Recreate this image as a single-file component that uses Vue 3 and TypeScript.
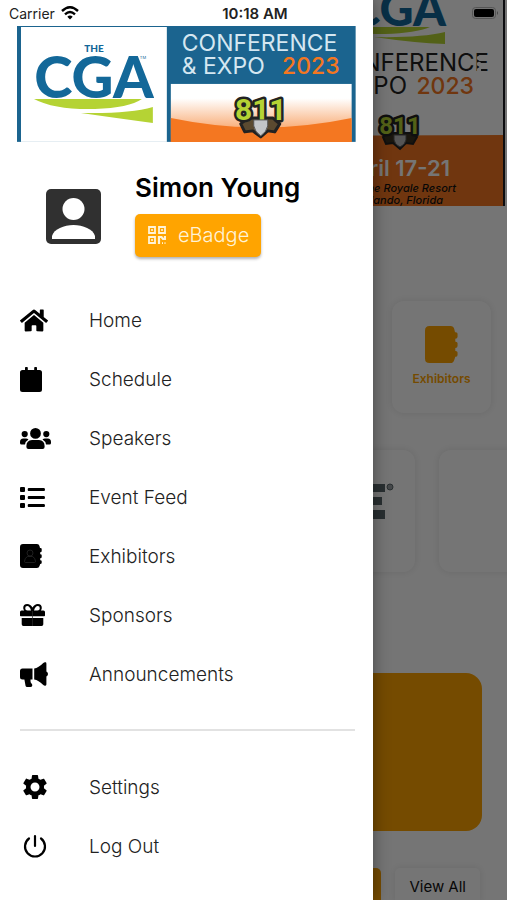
<script setup lang="ts">
interface MenuItem {
  label: string
  w: number
  h: number
  viewBox: string
  path: string
  detail?: string
}

const BOOK =
  'M3 0H17Q19 0 19.500 2L20 4H20.500Q21.700 4 21.700 5V7Q21.700 8.300 20.200 8.300V10.200H20.500Q21.700 10.200 21.700 11.200V13Q21.700 14.300 20.200 14.300V16.200H20.500Q21.700 16.200 21.700 17.200V18.800Q21.700 20 20.200 20L19.500 22Q19 24 17 24H3Q0 24 0 21V3Q0 0 3 0Z'

const items: MenuItem[] = [
  {
    label: 'Home', w: 28, h: 25, viewBox: '0 0 576 512',
    path: 'M280.37 148.26L96 300.11V464a16 16 0 0 0 16 16l112.06-.29a16 16 0 0 0 15.92-16V368a16 16 0 0 1 16-16h64a16 16 0 0 1 16 16v95.64a16 16 0 0 0 16 16.05L464 480a16 16 0 0 0 16-16V300L295.67 148.26a12.19 12.19 0 0 0-15.3 0zM571.6 251.47L488 182.56V44.05a12 12 0 0 0-12-12h-56a12 12 0 0 0-12 12v72.61L318.47 43a48 48 0 0 0-61 0L4.34 251.47a12 12 0 0 0-1.6 16.9l25.5 31A12 12 0 0 0 45.15 301l235.22-193.74a12.19 12.19 0 0 1 15.3 0L530.9 301a12 12 0 0 0 16.9-1.6l25.5-31a12 12 0 0 0-1.7-16.93z',
  },
  {
    label: 'Schedule', w: 22, h: 25, viewBox: '0 0 22 25',
    path: 'M2.5 3H5V.8Q5 0 5.8 0H7Q7.8 0 7.8 .8V3H14.2V.8Q14.2 0 15 0H16.2Q17 0 17 .8V3H19.5Q22 3 22 5.5V22.5Q22 25 19.5 25H2.5Q0 25 0 22.5V5.5Q0 3 2.5 3Z',
  },
  {
    label: 'Speakers', w: 31, h: 21, viewBox: '0 0 31 21',
    path: 'M15.5 0a5.4 5.4 0 1 1 0 10.8a5.4 5.4 0 0 1 0-10.8ZM4.7 3a3.1 3.1 0 1 1 0 6.2a3.1 3.1 0 0 1 0-6.2ZM26.3 3a3.1 3.1 0 1 1 0 6.2a3.1 3.1 0 0 1 0-6.2ZM12 12H19Q24.600 12.500 24.600 18V19Q24.600 21 22.600 21H8.400Q6.400 21 6.400 19V18Q6.400 12.500 12 12ZM3.300 10.500H6Q7.500 10.500 8.500 11.500Q5.500 13.200 5 16.500H1.500Q0 16.500 0 15V14Q0 10.500 3.300 10.500ZM27.700 10.500H25Q23.500 10.500 22.500 11.500Q25.500 13.200 26 16.500H29.500Q31 16.500 31 15V14Q31 10.500 27.700 10.500Z',
  },
  {
    label: 'Event Feed', w: 25, h: 21, viewBox: '0 0 25 21',
    path: 'M1 0H4Q5 0 5 1V4Q5 5 4 5H1Q0 5 0 4V1Q0 0 1 0ZM1 8H4Q5 8 5 9V12Q5 13 4 13H1Q0 13 0 12V9Q0 8 1 8ZM1 16H4Q5 16 5 17V20Q5 21 4 21H1Q0 21 0 20V17Q0 16 1 16ZM8.500 1H24Q25 1 25 2.500Q25 4 24 4H8.500Q7.700 4 7.700 2.500Q7.700 1 8.500 1ZM8.500 9H24Q25 9 25 10.500Q25 12 24 12H8.500Q7.700 12 7.700 10.500Q7.700 9 8.500 9ZM8.500 17H24Q25 17 25 18.500Q25 20 24 20H8.500Q7.700 20 7.700 18.500Q7.700 17 8.500 17Z',
  },
  {
    label: 'Exhibitors', w: 22, h: 24, viewBox: '0 0 22 24', path: BOOK,
    detail: 'M10 6a3 3 0 1 1 0 6a3 3 0 0 1 0-6ZM7.500 12.500H12.500Q15.500 14 15.500 17.500Q15.500 18.500 14.500 18.500H5.500Q4.500 18.500 4.500 17.500Q4.500 14 7.500 12.500Z',
  },
  {
    label: 'Sponsors', w: 25, h: 22, viewBox: '0 0 25 22',
    path: 'M1.500 6.500H4.200Q3.200 5.400 3.200 4Q3.200 0 7.200 0Q10.500 0 12.500 3.600Q14.500 0 17.800 0Q21.800 0 21.800 4Q21.800 5.400 20.800 6.500H23.500Q25 6.500 25 8V11.500Q25 12.300 24.200 12.300H.8Q0 12.300 0 11.500V8Q0 6.500 1.500 6.500ZM7.200 2Q5.200 2 5.200 4.200Q5.200 6.500 7.500 6.500H11Q9.800 2 7.200 2ZM17.800 2Q15.200 2 14 6.500H17.500Q19.800 6.500 19.800 4.200Q19.800 2 17.800 2ZM1.700 14H23.300V20.300Q23.300 22 21.600 22H3.400Q1.700 22 1.700 20.300Z',
    detail: 'M12.500 7V22',
  },
  {
    label: 'Announcements', w: 28, h: 25, viewBox: '0 0 28 25',
    path: 'M2.500 6.500H12.500V17.500H10.500V19Q10.500 20.500 11.500 21.500Q12.500 22.500 12.200 23.800Q11.900 25 10.500 25H7Q6 25 5.600 24L4.400 17.500H2.500Q0 17.500 0 15V9Q0 6.500 2.500 6.500ZM14.200 6.500Q18.500 5.800 23 1.200Q24.500-.3 25.800 .3Q26.400 .7 26.400 1.700V9.600Q28 10.400 28 12Q28 13.600 26.400 14.400V22.300Q26.400 23.300 25.800 23.600Q24.500 24.200 23 22.800Q18.500 18.200 14.200 17.500Z',
  },
]

const GEAR =
  'M19.14,12.94c0.04-0.3,0.06-0.61,0.06-0.94c0-0.32-0.02-0.64-0.07-0.94l2.03-1.58c0.18-0.14,0.23-0.41,0.12-0.61l-1.92-3.32c-0.12-0.22-0.37-0.29-0.59-0.22l-2.39,0.96c-0.5-0.38-1.03-0.7-1.62-0.94L14.4,2.81c-0.04-0.24-0.24-0.41-0.48-0.41h-3.84c-0.24,0-0.43,0.17-0.47,0.41L9.25,5.35C8.66,5.59,8.12,5.92,7.63,6.29L5.24,5.33c-0.22-0.08-0.47,0-0.59,0.22L2.74,8.87C2.62,9.08,2.66,9.34,2.86,9.48l2.03,1.58C4.84,11.36,4.8,11.69,4.8,12s0.02,0.64,0.07,0.94l-2.03,1.58c-0.18,0.14-0.23,0.41-0.12,0.61l1.92,3.32c0.12,0.22,0.37,0.29,0.59,0.22l2.39-0.96c0.5,0.38,1.03,0.7,1.62,0.94l0.36,2.54c0.05,0.24,0.24,0.41,0.48,0.41h3.84c0.24,0,0.44-0.17,0.47-0.41l0.36-2.54c0.59-0.24,1.13-0.56,1.62-0.94l2.39,0.96c0.22,0.08,0.47,0,0.59-0.22l1.92-3.32c0.12-0.22,0.07-0.47-0.12-0.61L19.14,12.94z M12,15.6c-1.98,0-3.6-1.62-3.6-3.6s1.62-3.6,3.6-3.6s3.6,1.62,3.6,3.6S13.98,15.6,12,15.6z'
</script>

<template>
  <div class="app">
    <main class="home">
      <svg class="hero" viewBox="0 0 507 206">
        <rect width="507" height="206" fill="#fff" />
        <rect x="503" width="2" height="206" fill="#1c1c22" />
        <text x="446" y="26" class="logo" font-size="47" text-anchor="end" fill="#136899">CGA</text>
        <path d="M330 27H430Q416 33 385 34Q350 35 330 27Z" fill="#b5d334" />
        <path d="M374 37Q420 38 445 32V44Q415 43 374 37Z" fill="#b5d334" />
        <text x="489" y="71" class="title" font-size="24" text-anchor="end" fill="#222">CONFERENCE</text>
        <text x="407" y="94" class="title" font-size="24" text-anchor="end" fill="#222">&amp; EXPO</text>
        <text x="474" y="94" class="year" font-size="23" text-anchor="end" fill="#f47721">2023</text>
        <path d="M0 137L503 135V206H0Z" fill="#f47721" />
        <g transform="translate(382 112)">
          <path d="M1 25L7 21H29L35 25L31 32L24 31L18 37L11 31L4 32Z" fill="#3a3020" stroke="#222" stroke-width="2" />
          <text x="18" y="22" class="badge" font-size="24" text-anchor="middle">811</text>
          <path d="M12 23H24V28Q23 33 18 35Q13 33 12 28Z" fill="#b9b9b9" stroke="#555" />
        </g>
        <text x="450" y="176" class="sans" font-size="22" font-weight="600" text-anchor="end" fill="#fff">April 17-21</text>
        <text x="456" y="192" class="sans italic" font-size="11" text-anchor="end" fill="#111">The Royale Resort</text>
        <text x="443" y="204" class="sans italic" font-size="11" text-anchor="end" fill="#111">Orlando, Florida</text>
        <g fill="#fff">
          <circle cx="479" cy="58" r="2.200" />
          <circle cx="479" cy="64" r="2.200" />
          <circle cx="479" cy="70" r="2.200" />
        </g>
      </svg>

      <section class="tiles">
        <a class="card tile" href="#exhibitors">
          <svg width="33" height="37" viewBox="0 0 22 24" preserveAspectRatio="none"><path :d="BOOK" fill="#ffa400" /></svg>
          <span>Exhibitors</span>
        </a>
      </section>

      <section class="carousel">
        <div class="card slide">
          <svg width="36" height="40" viewBox="0 0 36 40">
            <path d="M0 2H26V10H0ZM0 15H23V23H0ZM0 28H26V37H0Z" fill="#5b666b" />
            <circle cx="31" cy="5" r="3" fill="#9aa0a3" stroke="#5b666b" />
          </svg>
        </div>
        <div class="card slide"></div>
      </section>

      <section class="promo"></section>

      <section class="filters">
        <span class="active"></span>
        <button type="button" class="card all">View All</button>
      </section>
    </main>

    <div class="scrim">
      <svg class="battery" width="27" height="12" viewBox="0 0 27 12">
        <rect x="0.500" y="0.500" width="23" height="11" rx="3" fill="none" stroke="#555" />
        <rect x="2" y="2" width="20" height="8" rx="2" fill="#000" />
        <path d="M25 4Q27 6 25 8Z" fill="#444" />
      </svg>
    </div>

    <aside class="drawer">
      <header class="status">
        <span class="carrier">
          Carrier
          <svg width="18" height="14" viewBox="0 0 18 14">
            <g fill="none" stroke="#000" stroke-width="2.400">
              <path d="M1 5Q9-2.500 17 5" />
              <path d="M4 8.300Q9 3.700 14 8.300" />
            </g>
            <path d="M6.300 10.700Q9 8.300 11.700 10.700L9 13.500Z" />
          </svg>
        </span>
        <time>10:18 AM</time>
      </header>

      <svg class="banner" viewBox="0 0 339 116">
        <defs>
          <linearGradient id="glow" x1="0" y1="0" x2="0" y2="1">
            <stop offset="0" stop-color="#fff" />
            <stop offset="0.250" stop-color="#fff" />
            <stop offset="0.750" stop-color="#f9b07c" />
            <stop offset="1" stop-color="#f47721" />
          </linearGradient>
        </defs>
        <rect width="339" height="116" fill="#1b648f" />
        <rect x="4" y="1" width="146" height="115" fill="#fff" />
        <text x="77" y="26" class="logo" font-size="10" text-anchor="middle" fill="#136899">THE</text>
        <text x="77" y="72" class="logo" font-size="58" text-anchor="middle" fill="#136899">CGA</text>
        <text x="123" y="33" class="sans" font-size="4" fill="#136899">TM</text>
        <path d="M17 73H125Q112 82 78 83Q38 84 17 73Z" fill="#b5d334" />
        <path d="M64 87Q112 88 136 81V97Q106 93 64 87Z" fill="#b5d334" />
        <text x="165" y="25" class="title" font-size="23" fill="#d5e7f1">CONFERENCE</text>
        <text x="165" y="48" class="title" font-size="23" fill="#d5e7f1">&amp; EXPO</text>
        <text x="323" y="48" class="year" font-size="23" text-anchor="end" fill="#f47721">2023</text>
        <rect x="154" y="58" width="181" height="58" fill="url(#glow)" />
        <path d="M154 92Q245 111 335 92V116H154Z" fill="#f47721" />
        <g transform="translate(222 67)">
          <path d="M2 31L9 25H34L41 31L36 39L29 38L22 44L14 38L6 39Z" fill="#5b4a30" stroke="#222" stroke-width="3" stroke-linejoin="round" />
          <text x="22" y="27" class="badge" font-size="30" text-anchor="middle">811</text>
          <path d="M15 27H29V33Q28 39 22 43Q16 39 15 33Z" fill="#c4c6c8" stroke="#555" />
        </g>
      </svg>

      <section class="profile">
        <svg class="avatar" width="55" height="55" viewBox="0 0 55 55">
          <rect width="55" height="55" rx="5" fill="#303030" />
          <circle cx="27.500" cy="20" r="11" fill="#fff" />
          <path d="M6 47C8 40 18 36 27.500 36S47 40 49 47V50H6Z" fill="#fff" />
        </svg>
        <div class="who">
          <h1>Simon Young</h1>
          <button type="button" class="ebadge">
            <svg width="18" height="18" viewBox="0 0 18 18" fill="none" stroke="#fff3d6" stroke-width="1.800">
              <path d="M1 1H7V7H1ZM11 1H17V7H11ZM1 11H7V17H1Z" />
              <path d="M3.200 4H4.800M13.200 4H14.800M3.200 14H4.800" />
              <path d="M11 18V11H13.500L15 13H17V10" stroke-width="2.200" />
              <path d="M14 17.200H15M16.500 17.200H17.500" />
            </svg>
            eBadge
          </button>
        </div>
      </section>

      <nav aria-label="Main">
        <a v-for="item in items" :key="item.label" class="row" :href="'#' + item.label">
          <span class="icon">
            <svg :width="item.w" :height="item.h" :viewBox="item.viewBox">
              <path :d="item.path" fill-rule="evenodd" />
              <path v-if="item.detail" :d="item.detail" fill="none" stroke="#2c2c2c" stroke-width="0.700" />
            </svg>
          </span>
          {{ item.label }}
        </a>
      </nav>

      <hr />

      <nav aria-label="Account">
        <a class="row" href="#settings">
          <span class="icon inset">
            <svg width="24" height="24" viewBox="2.400 2.400 19.200 19.200"><path :d="GEAR" /></svg>
          </span>
          Settings
        </a>
        <a class="row" href="#logout">
          <span class="icon inset">
            <svg width="24" height="24" viewBox="0 0 24 24" fill="none" stroke="#000" stroke-width="2.200" stroke-linecap="round">
              <path d="M12 2V12M6 4.500A10 10 0 1 0 18 4.500" />
            </svg>
          </span>
          Log Out
        </a>
      </nav>
    </aside>
  </div>
</template>

<style>
body {
  margin: 0;
}
</style>

<style scoped>
.app {
  display: grid;
  grid-template-columns: minmax(0, 1fr);
  min-height: 100vh;
  overflow: hidden;
  font-family: Inter, 'Open Sans', sans-serif;
  color: #222;
}
.app > * {
  grid-area: 1 / 1;
}
svg {
  display: block;
  flex: none;
}
a {
  color: inherit;
  text-decoration: none;
}
button {
  border: 0;
  font: inherit;
}

.logo {
  font-family: Lato, sans-serif;
  font-weight: 900;
}
.title {
  font-family: Inter, sans-serif;
  font-weight: 400;
}
.year {
  font-family: Inter, sans-serif;
  font-weight: 500;
}
.sans {
  font-family: Inter, sans-serif;
}
.italic {
  font-style: italic;
  font-weight: 500;
}
.badge {
  font-family: Roboto, sans-serif;
  font-weight: 700;
  fill: #b5d334;
  stroke: #222;
  stroke-width: 5px;
  stroke-linejoin: round;
  paint-order: stroke;
}

.home {
  display: flex;
  flex-direction: column;
  height: 100vh;
  overflow: hidden;
  background: #fff;
}
.hero {
  width: 100%;
}
.card {
  box-sizing: border-box;
  border-radius: 12px;
  background: #fff;
  box-shadow: 0 0 8px rgba(0, 0, 0, 0.1);
}
.tiles {
  display: flex;
  justify-content: flex-end;
  padding: 95px 16px 0;
}
.tile {
  display: flex;
  flex-direction: column;
  align-items: center;
  gap: 8px;
  width: 99px;
  height: 112px;
  padding-top: 25px;
  color: #ffa400;
  font-size: 12px;
  line-height: 16px;
  font-weight: 600;
}
.carousel {
  display: flex;
  gap: 24px;
  padding: 37px 0 0 24px;
}
.slide {
  display: flex;
  justify-content: flex-end;
  flex: 0 0 calc(100% - 92px);
  height: 122px;
  padding: 32px 20px;
}
.promo {
  flex: none;
  height: 158px;
  margin: 101px 25px 0;
  border-radius: 16px;
  background: #ffa400;
}
.filters {
  display: flex;
  justify-content: flex-end;
  align-items: flex-start;
  gap: 14px;
  padding: 37px 27px 0;
}
.active {
  width: 96px;
  height: 40px;
  border-radius: 5px;
  background: #ffa400;
}
.all {
  height: 36px;
  padding: 0 14px;
  border-radius: 5px;
  font-size: 15px;
  color: #111;
}

.scrim {
  display: flex;
  justify-content: flex-end;
  align-items: flex-start;
  padding: 7px 8px 0;
  background: rgba(0, 0, 0, 0.54);
}

.drawer {
  width: 73.5%;
  background: #fff;
  box-shadow: 0 0 16px rgba(0, 0, 0, 0.4);
}
.status {
  display: flex;
  justify-content: space-between;
  align-items: center;
  height: 26px;
  padding: 0 85px 0 9px;
  font-size: 14px;
}
.carrier {
  display: flex;
  align-items: center;
  gap: 6px;
}
time {
  font-size: 15px;
  font-weight: 600;
}
.banner {
  box-sizing: border-box;
  width: 100%;
  padding: 0 17px;
}
.profile {
  display: flex;
  align-items: center;
  gap: 34px;
  padding: 30px 16px 34px 46px;
}
.avatar {
  margin-top: 4px;
}
.who {
  display: flex;
  flex-direction: column;
  align-items: flex-start;
  gap: 10px;
}
h1 {
  margin: 0;
  font-size: 26px;
  line-height: 32px;
  font-weight: 600;
  color: #000;
}
.ebadge {
  display: flex;
  align-items: center;
  gap: 12px;
  height: 43px;
  padding: 0 12px 0 13px;
  border-radius: 5px;
  background: #ffa400;
  box-shadow: 0 2px 3px rgba(0, 0, 0, 0.3);
  color: #fff3d6;
  font-size: 20px;
  font-weight: 300;
}
.row {
  display: flex;
  align-items: center;
  height: 59px;
  padding-left: 20px;
  font-size: 19px;
  font-weight: 300;
}
.icon {
  width: 69px;
}
.inset {
  box-sizing: border-box;
  padding-left: 3px;
}
hr {
  height: 2px;
  margin: 25px 18px 27px 20px;
  border: 0;
  background: #e2e2e2;
}
</style>
